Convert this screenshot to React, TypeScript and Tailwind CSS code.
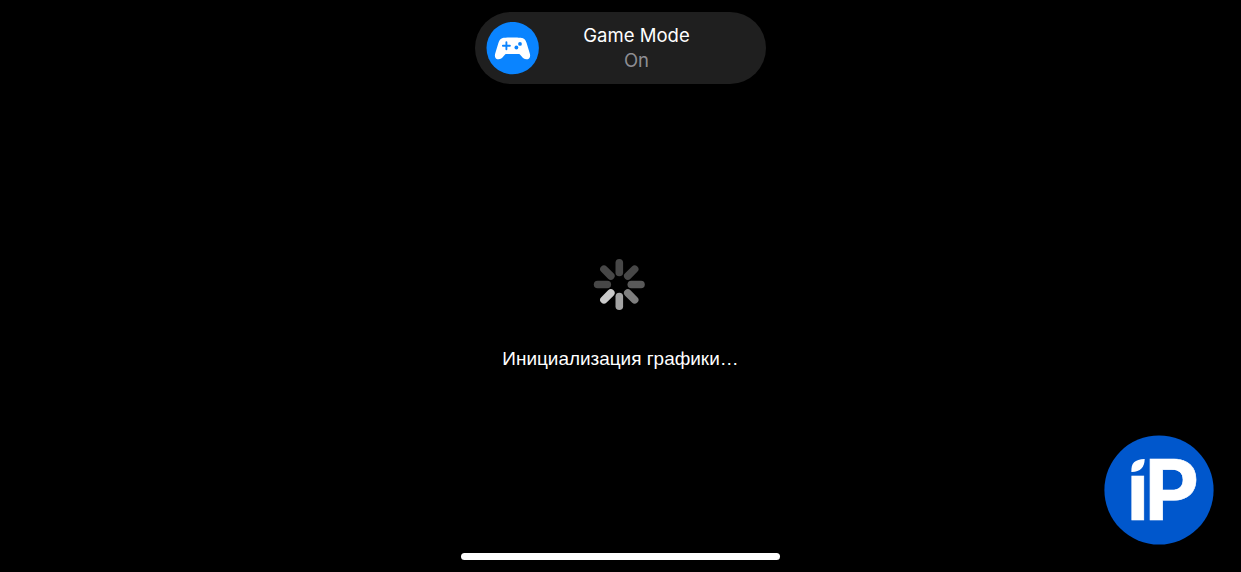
const SPOKES = [
  { angle: 0, color: "#474747" },
  { angle: 45, color: "#474747" },
  { angle: 90, color: "#595959" },
  { angle: 135, color: "#7e7e7e" },
  { angle: 180, color: "#a3a3a3" },
  { angle: 225, color: "#cbcbcb" },
  { angle: 270, color: "#474747" },
  { angle: 315, color: "#474747" },
];

function GamepadIcon(): JSX.Element {
  return (
    <svg viewBox="0 0 53 53" className="h-[53px] w-[53px] flex-none" aria-hidden="true">
      <circle cx="26.7" cy="26.1" r="26.2" fill="#0a84ff" />
      <path
        d="M16.7 16C19 15.2 34 15.2 36.3 16C38.8 16.8 39.7 18.5 40.6 21.1L43.8 31.5C44.9 35.4 43.1 37.3 40.4 37.3C38.3 37.3 37.2 36.2 35.7 34.5L33.9 32.4C33.5 32 33.1 31.9 32.5 31.9H20.5C19.9 31.9 19.5 32 19.1 32.4L17.3 34.5C15.8 36.2 14.7 37.3 12.6 37.3C9.9 37.3 8.1 35.4 9.2 31.5L12.4 21.1C13.3 18.5 14.2 16.8 16.7 16Z"
        fill="#fff"
      />
      <path d="M20.4 20.2V27.2M16.9 23.7H23.9" stroke="#0a84ff" strokeWidth="1.9" strokeLinecap="round" />
      <circle cx="34" cy="21.9" r="1.9" fill="#0a84ff" />
      <circle cx="30.4" cy="25.5" r="1.9" fill="#0a84ff" />
    </svg>
  );
}

function GameModeBanner(): JSX.Element {
  return (
    <div className="mt-3 flex h-[72px] w-[291px] items-center rounded-[36px] bg-[#1f1f1f] pl-[11px]">
      <GamepadIcon />
      <div className="ml-[20px] w-[155px] text-center font-['Inter',sans-serif] text-[18.5px] leading-[25px]">
        <p className="tracking-[0.02px] text-white">Game Mode</p>
        <p className="text-[#8e8e93]">On</p>
      </div>
    </div>
  );
}

function Spinner(): JSX.Element {
  return (
    <svg viewBox="-26.3 -25.5 52 52" className="h-[52px] w-[52px]" aria-hidden="true">
      {SPOKES.map((spoke) => (
        <line
          key={spoke.angle}
          y1="-21.7"
          y2="-12"
          stroke={spoke.color}
          strokeWidth="7.6"
          strokeLinecap="round"
          transform={`rotate(${spoke.angle})`}
        />
      ))}
    </svg>
  );
}

function BrandBadge(): JSX.Element {
  return (
    <svg viewBox="0 0 110 110" className="absolute right-[27px] bottom-[27px] h-[110px] w-[110px]">
      <circle cx="55" cy="55" r="54.6" fill="#0057cc" />
      <path d="M27.4 37C26.9 28.2 30.6 24.2 40.7 24C40.4 32.2 36.6 37.1 27.4 37Z" fill="#fff" />
      <text
        y="85.3"
        fill="#fff"
        stroke="#fff"
        strokeWidth="0.6"
        className="font-['Inter',sans-serif] text-[84.5px] font-bold"
      >
        <tspan x="22.7" className="text-[81.5px]">ı</tspan>
        <tspan x="40.5">P</tspan>
      </text>
    </svg>
  );
}

export default function App(): JSX.Element {
  return (
    <main className="relative flex h-[572px] w-full flex-col items-center overflow-hidden bg-black">
      <GameModeBanner />
      <div className="mt-[175px] mr-[3px]">
        <Spinner />
      </div>
      <p className="mt-[36px] font-['Liberation_Sans',sans-serif] text-[18.95px] leading-6 whitespace-nowrap text-white">
        Инициализация графики…
      </p>
      <div className="mt-auto mb-3 h-[7px] w-[319px] rounded-full bg-white" />
      <BrandBadge />
    </main>
  );
}
